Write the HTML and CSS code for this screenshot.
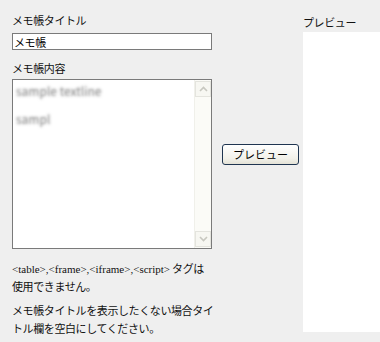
FILE: index.html
```html
<!DOCTYPE html>
<html lang="ja">
<head>
  <meta charset="UTF-8">
  <title>メモ帳</title>
  <link rel="stylesheet" href="styles.css">
</head>
<body>
<div class="page">
  <div class="editor">
    <label class="field-label" for="memo-title">メモ帳タイトル</label>
    <input id="memo-title" class="title-input" type="text" value="メモ帳">

    <label class="field-label body-label" for="memo-body">メモ帳内容</label>
    <div class="memo-box">
      <textarea id="memo-body" class="memo-text">sample textline

sampl</textarea>
      <div class="scrollbar">
        <span class="scroll-btn">
          <svg width="9" height="6" viewBox="0 0 9 6"><path d="M1 5 L4.5 1.5 L8 5" fill="none" stroke="#c8c8c0" stroke-width="1.6"/></svg>
        </span>
        <span class="scroll-btn">
          <svg width="9" height="6" viewBox="0 0 9 6"><path d="M1 1 L4.5 4.5 L8 1" fill="none" stroke="#c8c8c0" stroke-width="1.6"/></svg>
        </span>
      </div>
    </div>

    <p class="note"><span class="tags">&lt;table&gt;,&lt;frame&gt;,&lt;iframe&gt;,&lt;script&gt;</span> タグは<br>使用できません。</p>
    <p class="note">メモ帳タイトルを表示したくない場合タイ<br>トル欄を空白にしてください。</p>
  </div>

  <div class="actions">
    <button class="btn-preview" type="button">プレビュー</button>
  </div>

  <div class="preview">
    <div class="preview-label">プレビュー</div>
    <div class="preview-pane"></div>
  </div>
</div>
</body>
</html>
```

FILE: styles.css
```css
html, body {
  margin: 0;
  height: 100%;
  overflow: hidden;
}

body {
  background: #efefef;
  font-family: "Noto Sans CJK JP", "Noto Sans", sans-serif;
  font-size: 11px;
  letter-spacing: -0.4px;
  line-height: 15px;
  color: #111111;
}

.page {
  display: flex;
  padding: 13px 0 0 12px;
}

.editor {
  display: flex;
  flex-direction: column;
  width: 200px;
  flex-shrink: 0;
}

.field-label {
  display: block;
  line-height: 15px;
}

.body-label {
  margin-top: 11px;
}

.title-input {
  box-sizing: border-box;
  width: 200px;
  height: 17px;
  margin: 5px 0 0;
  padding: 0 1px;
  border: 1px solid #7a7a7a;
  background: #ffffff;
  font-family: inherit;
  font-size: 11px;
  letter-spacing: -0.4px;
  color: #000000;
  outline: none;
}

.memo-box {
  display: flex;
  box-sizing: border-box;
  width: 200px;
  height: 170px;
  margin-top: 3px;
  border: 1px solid #7a7a7a;
  background: #ffffff;
}

.memo-text {
  flex: 1;
  margin: 0;
  padding: 4px 3px;
  border: 0;
  resize: none;
  outline: none;
  overflow: hidden;
  font-family: inherit;
  font-size: 12px;
  line-height: 14px;
  color: transparent;
  text-shadow: 0 0 3px #7a7a7a;
  background: transparent;
}

.scrollbar {
  display: flex;
  flex-direction: column;
  justify-content: space-between;
  width: 16px;
  padding: 1px 0;
  background: #fbfbf7;
  border-left: 1px solid #f0f0ea;
}

.scroll-btn {
  display: flex;
  align-items: center;
  justify-content: center;
  box-sizing: border-box;
  width: 16px;
  height: 16px;
  border: 1px solid #e4e4de;
  background: #f7f7f2;
}

.note {
  margin: 11px 0 0;
  line-height: 17px;
  white-space: nowrap;
}

.note + .note {
  margin-top: 6px;
  line-height: 18px;
}

.tags {
  font-family: "Liberation Serif", serif;
  font-size: 11px;
  letter-spacing: 0;
}

.actions {
  width: 91px;
  flex-shrink: 0;
  padding-top: 131px;
}

.btn-preview {
  width: 77px;
  height: 21px;
  margin-left: 10px;
  padding: 0;
  border: 1px solid #1f3550;
  border-radius: 3px;
  background: linear-gradient(#ffffff, #f2f1ea 70%, #e4e2d6);
  font-family: inherit;
  font-size: 11px;
  letter-spacing: 0;
  line-height: 17px;
  color: #000000;
}

.preview {
  flex: 1;
  min-width: 0;
}

.preview-label {
  padding-top: 1px;
  line-height: 16px;
  margin-bottom: 2px;
  white-space: nowrap;
}

.preview-pane {
  height: 300px;
  background: #ffffff;
}
```
